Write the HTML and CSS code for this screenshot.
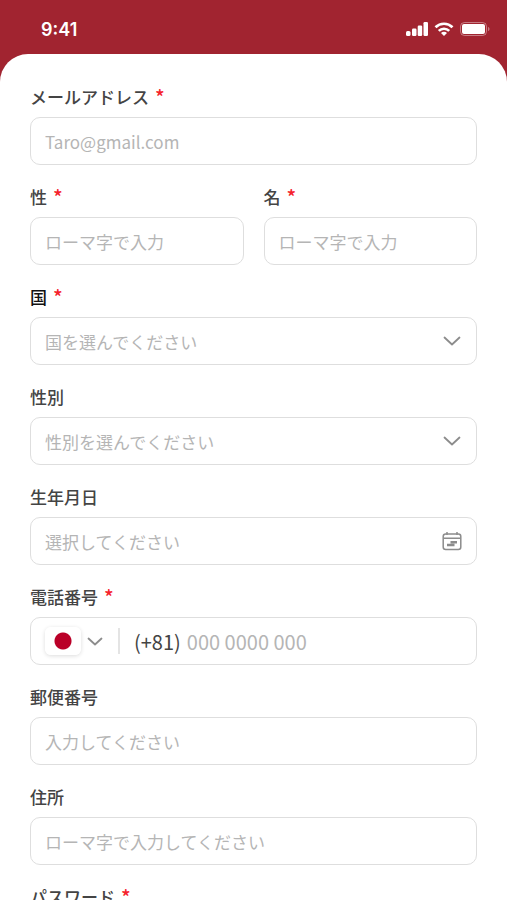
FILE: index.html
```html
<!DOCTYPE html>
<html lang="ja">
<head>
    <meta charset="UTF-8">
    <meta name="viewport" content="width=device-width, initial-scale=1">
    <title>会員登録</title>
    <link rel="stylesheet" href="styles.css">
</head>
<body>
<header class="status-bar">
    <span class="time">9:41</span>
    <div class="status-icons">
        <svg width="22" height="14" viewBox="0 0 22 14" fill="#fff">
            <rect x="0" y="9" width="4.500" height="5" rx="1.500"/>
            <rect x="6" y="6.500" width="4.500" height="7.500" rx="1.200"/>
            <rect x="11.700" y="3.500" width="4.500" height="10.500" rx="1.200"/>
            <rect x="17.500" y="0" width="4.500" height="14" rx="1.200"/>
        </svg>
        <svg width="20" height="14" viewBox="0 0 20 14" fill="none" stroke="#fff" stroke-width="2.700">
            <path d="M1.500 5.200a12.200 12.200 0 0 1 17 0"/>
            <path d="M4.800 8.900a7.400 7.400 0 0 1 10.400 0"/>
            <path d="M10 14l-3-3.100a4.200 4.200 0 0 1 6 0z" fill="#fff" stroke="none"/>
        </svg>
        <svg width="30" height="14" viewBox="0 0 30 14">
            <rect x="0.500" y="0.500" width="26" height="13" rx="4" fill="none" stroke="#fff" stroke-opacity="0.4"/>
            <rect x="2" y="2" width="23" height="10" rx="2" fill="#fff"/>
            <path d="M28 5v4c1-.4 1.500-1.100 1.500-2S29 5.400 28 5z" fill="#fff" fill-opacity="0.4"/>
        </svg>
    </div>
</header>
<form class="sheet">
    <div class="field">
        <label for="email">メールアドレス<span class="required">*</span></label>
        <input class="box" type="email" id="email" placeholder="Taro@gmail.com">
    </div>
    <div class="row">
        <div class="field">
            <label for="last-name">性<span class="required">*</span></label>
            <input class="box" type="text" id="last-name" placeholder="ローマ字で入力">
        </div>
        <div class="field">
            <label for="first-name">名<span class="required">*</span></label>
            <input class="box" type="text" id="first-name" placeholder="ローマ字で入力">
        </div>
    </div>
    <div class="field">
        <label for="country" class="dark">国<span class="required">*</span></label>
        <div class="box">
            <select class="control" id="country">
                <option value="">国を選んでください</option>
            </select>
            <svg class="chevron" width="18" height="10" viewBox="0 0 18 10"><path d="M1.500 1.500L9 8.500l7.500-7"/></svg>
        </div>
    </div>
    <div class="field">
        <label for="gender">性別</label>
        <div class="box">
            <select class="control" id="gender">
                <option value="">性別を選んでください</option>
            </select>
            <svg class="chevron" width="18" height="10" viewBox="0 0 18 10"><path d="M1.500 1.500L9 8.500l7.500-7"/></svg>
        </div>
    </div>
    <div class="field">
        <label for="birthday">生年月日</label>
        <div class="box">
            <input class="control" type="text" id="birthday" placeholder="選択してください">
            <button type="button" class="calendar" aria-label="カレンダー">
                <svg width="20" height="20" viewBox="0 0 20 20" fill="none" stroke="#8c8c8c" stroke-width="1.500">
                    <rect x="1.200" y="3" width="17.600" height="15.500" rx="2.500"/>
                    <path d="M1.500 7.200h17M5 1v3M15 1v3"/>
                    <path d="M8.500 11.300h6.500M5 14h7.500" stroke-width="2.500"/>
                </svg>
            </button>
        </div>
    </div>
    <div class="field">
        <label for="phone">電話番号<span class="required">*</span></label>
        <div class="box phone">
            <select class="flag" aria-label="国番号">
                <option value="81" aria-label="日本"></option>
            </select>
            <svg class="chevron" width="16" height="9" viewBox="0 0 16 9"><path d="M1.500 1.500L8 7.500l6.500-6"/></svg>
            <span class="divider"></span>
            <span class="code">(+81)</span>
            <input class="control" type="tel" id="phone" placeholder="000 0000 000">
        </div>
    </div>
    <div class="field">
        <label for="zip">郵便番号</label>
        <input class="box" type="text" id="zip" placeholder="入力してください">
    </div>
    <div class="field">
        <label for="address">住所</label>
        <input class="box" type="text" id="address" placeholder="ローマ字で入力してください">
    </div>
    <div class="field">
        <label for="password">パスワード<span class="required">*</span></label>
        <input class="box" type="password" id="password">
    </div>
</form>
</body>
</html>
```
FILE: styles.css
```css
*{
    margin: 0;
    padding: 0;
    box-sizing: border-box;
}
html{
    scrollbar-width: none;
}
body{
    background: #a12430;
    font-family: "Noto Sans CJK JP", sans-serif;
    font-size: 17px;
    color: #444;
}
input, select, button{
    font: inherit;
    color: inherit;
    border: none;
    background: none;
    outline: none;
}
.status-bar{
    display: flex;
    justify-content: space-between;
    align-items: center;
    height: 54px;
    padding: 4px 17px 0 41px;
    color: #fff;
}
.time{
    font-family: Inter, sans-serif;
    font-size: 18px;
    font-weight: 600;
}
.status-icons{
    display: flex;
    align-items: center;
    gap: 6px;
}
.sheet{
    display: flex;
    flex-direction: column;
    gap: 20px;
    padding: 31px 30px 40px;
    background: #fff;
    border-radius: 28px 28px 0 0;
}
.row{
    display: flex;
    gap: 20px;
}
.field{
    display: flex;
    flex-direction: column;
    gap: 8px;
    flex: 1;
    min-width: 0;
}
label{
    display: flex;
    gap: 6px;
    line-height: 24px;
    font-weight: 500;
}
label.dark{
    color: #111;
}
.required{
    font-size: 20px;
    color: #f5222d;
}
.box{
    display: flex;
    align-items: center;
    width: 100%;
    height: 48px;
    padding: 0 14px;
    border: 1px solid #dedede;
    border-radius: 10px;
}
.control{
    flex: 1;
    min-width: 0;
    height: 100%;
    appearance: none;
}
select.control, ::placeholder{
    color: #b5b5b5;
    opacity: 1;
}
.chevron{
    flex: none;
    margin-right: 1px;
    fill: none;
    stroke: #8c8c8c;
    stroke-width: 1.8;
    stroke-linecap: round;
    stroke-linejoin: round;
    pointer-events: none;
}
.calendar{
    display: flex;
    cursor: pointer;
}
.phone{
    font-size: 20px;
}
.flag{
    width: 36px;
    height: 28px;
    margin-right: 6px;
    border-radius: 6px;
    background: radial-gradient(circle, #ba0028 8px, #fff 9px);
    box-shadow: 0 1px 4px rgba(0, 0, 0, 0.14);
    appearance: none;
}
.divider{
    width: 2px;
    height: 26px;
    margin: 0 14px;
    background: #e4e4e4;
}
.code{
    margin-right: 6px;
}
```
